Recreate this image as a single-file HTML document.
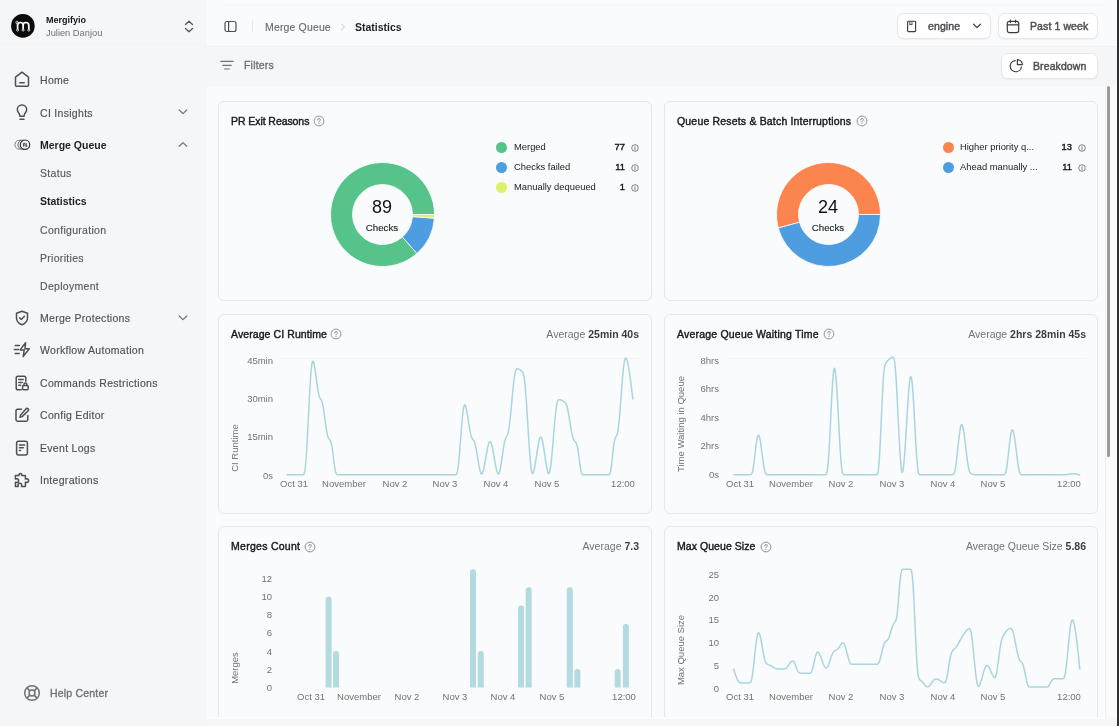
<!DOCTYPE html>
<html><head><meta charset="utf-8"><style>
html,body{margin:0;padding:0;}
body{width:1119px;height:726px;overflow:hidden;position:relative;background:#f9fafb;font-family:"Liberation Sans",sans-serif;}
.t{position:absolute;white-space:nowrap;will-change:transform;}
svg{overflow:visible;}
</style></head><body>
<div style="position:absolute;left:0px;top:0px;width:207px;height:726px;background:#f5f6f8;"></div>
<div style="position:absolute;left:0px;top:44px;width:207px;height:1px;background:#f1f2f4;"></div>
<div style="position:absolute;left:207px;top:0px;width:912px;height:46px;background:#fafbfc;"></div>
<div style="position:absolute;left:224px;top:4px;width:881px;height:3px;background:#f7f8f9;"></div>
<div style="position:absolute;left:207px;top:46px;width:912px;height:40px;background:#f5f6f8;border-top:1.5px solid #eff0f2;box-sizing:border-box;"></div>
<div style="position:absolute;left:207px;top:86px;width:898px;height:632px;background:#fafbfc;"></div>
<div style="position:absolute;left:1105px;top:85px;width:12px;height:633px;background:#fafafa;border-left:1px solid #f0f0f0;box-sizing:border-box;"></div>
<div style="position:absolute;left:1107px;top:86px;width:3px;height:371px;background:#9b9b9b;border-radius:2px;"></div>
<div style="position:absolute;left:1117px;top:0px;width:2px;height:726px;background:#2e3032;"></div>
<svg style="position:absolute;left:11px;top:14px;" width="24" height="24" viewBox="0 0 24 24"><circle cx="11.9" cy="11.9" r="11.8" fill="#0b0b0b"/><path d="M6.6 16 V9.2 M6.6 11.2 Q6.6 8.5 9.35 8.5 Q12.1 8.5 12.1 11.2 V16 M12.1 11.2 Q12.1 8.5 14.95 8.5 Q17.8 8.5 17.8 11.2 V16" stroke="#fff" stroke-width="1.7" fill="none"/><circle cx="6.6" cy="16.1" r="1" fill="#0b0b0b" stroke="#fff" stroke-width="0.8"/><circle cx="12.1" cy="16.1" r="1" fill="#0b0b0b" stroke="#fff" stroke-width="0.8"/><circle cx="17.8" cy="16.1" r="1" fill="#0b0b0b" stroke="#fff" stroke-width="0.8"/><circle cx="5.9" cy="8.4" r="1.1" fill="#0b0b0b" stroke="#fff" stroke-width="0.8"/></svg>
<div class="t" style="left:45.50px;top:14.93px;font-size:9px;line-height:11.7px;font-weight:700;color:#141414;">Mergifyio</div>
<div class="t" style="left:45.50px;top:26.73px;font-size:9.3px;line-height:12.09px;font-weight:400;color:#707275;">Julien Danjou</div>
<svg style="position:absolute;left:183px;top:19px;" width="12" height="15" viewBox="0 0 12 15"><path d="M2.5 5.5 L6 2.2 L9.5 5.5 M2.5 9.5 L6 12.8 L9.5 9.5" stroke="#4e5055" stroke-width="1.2" fill="none" stroke-linecap="round" stroke-linejoin="round"/></svg>
<div class="t" style="left:39.80px;top:74.24px;font-size:10.5px;line-height:13.65px;font-weight:400;color:#4e5055;-webkit-text-stroke:0.15px #4e5055;letter-spacing:0.3px;">Home</div>
<div class="t" style="left:39.80px;top:107.14px;font-size:10.5px;line-height:13.65px;font-weight:400;color:#4e5055;-webkit-text-stroke:0.15px #4e5055;letter-spacing:0.3px;">CI Insights</div>
<div class="t" style="left:39.80px;top:139.34px;font-size:10.5px;line-height:13.65px;font-weight:700;color:#1e1f22;">Merge Queue</div>
<div class="t" style="left:39.80px;top:312.34px;font-size:10.5px;line-height:13.65px;font-weight:400;color:#4e5055;-webkit-text-stroke:0.15px #4e5055;letter-spacing:0.3px;">Merge Protections</div>
<div class="t" style="left:39.80px;top:344.04px;font-size:10.5px;line-height:13.65px;font-weight:400;color:#4e5055;-webkit-text-stroke:0.15px #4e5055;letter-spacing:0.3px;">Workflow Automation</div>
<div class="t" style="left:39.80px;top:377.14px;font-size:10.5px;line-height:13.65px;font-weight:400;color:#4e5055;-webkit-text-stroke:0.15px #4e5055;letter-spacing:0.3px;">Commands Restrictions</div>
<div class="t" style="left:39.80px;top:409.24px;font-size:10.5px;line-height:13.65px;font-weight:400;color:#4e5055;-webkit-text-stroke:0.15px #4e5055;letter-spacing:0.3px;">Config Editor</div>
<div class="t" style="left:39.80px;top:442.24px;font-size:10.5px;line-height:13.65px;font-weight:400;color:#4e5055;-webkit-text-stroke:0.15px #4e5055;letter-spacing:0.3px;">Event Logs</div>
<div class="t" style="left:39.80px;top:474.34px;font-size:10.5px;line-height:13.65px;font-weight:400;color:#4e5055;-webkit-text-stroke:0.15px #4e5055;letter-spacing:0.3px;">Integrations</div>
<div class="t" style="left:39.80px;top:167.24px;font-size:10.5px;line-height:13.65px;font-weight:400;color:#56585c;-webkit-text-stroke:0.15px #56585c;letter-spacing:0.3px;">Status</div>
<div class="t" style="left:39.80px;top:195.34px;font-size:10.5px;line-height:13.65px;font-weight:700;color:#1e1f22;">Statistics</div>
<div class="t" style="left:39.80px;top:224.34px;font-size:10.5px;line-height:13.65px;font-weight:400;color:#56585c;-webkit-text-stroke:0.15px #56585c;letter-spacing:0.3px;">Configuration</div>
<div class="t" style="left:39.80px;top:252.24px;font-size:10.5px;line-height:13.65px;font-weight:400;color:#56585c;-webkit-text-stroke:0.15px #56585c;letter-spacing:0.3px;">Priorities</div>
<div class="t" style="left:39.80px;top:280.34px;font-size:10.5px;line-height:13.65px;font-weight:400;color:#56585c;-webkit-text-stroke:0.15px #56585c;letter-spacing:0.3px;">Deployment</div>
<svg style="position:absolute;left:13px;top:70px;" width="18" height="18" viewBox="0 0 18 18"><path d="M2.5 7.2 L9 2.2 L15.5 7.2 V15.2 Q15.5 16.2 14.5 16.2 H3.5 Q2.5 16.2 2.5 15.2 Z" stroke="#4e5055" stroke-width="1.5" fill="none" stroke-linecap="round" stroke-linejoin="round"/><path d="M6.8 12.8 H11.2" stroke="#4e5055" stroke-width="1.5" fill="none" stroke-linecap="round" stroke-linejoin="round"/></svg>
<svg style="position:absolute;left:13px;top:103px;" width="18" height="18" viewBox="0 0 18 18"><path d="M9 2 C6 2 4.3 4.2 4.3 6.6 C4.3 8.6 5.5 9.6 6.3 10.8 C6.8 11.6 6.9 12.4 6.9 13.2 H11.1 C11.1 12.4 11.2 11.6 11.7 10.8 C12.5 9.6 13.7 8.6 13.7 6.6 C13.7 4.2 12 2 9 2 Z" stroke="#4e5055" stroke-width="1.5" fill="none" stroke-linecap="round" stroke-linejoin="round"/><path d="M7 16.2 H11" stroke="#4e5055" stroke-width="1.5" fill="none" stroke-linecap="round" stroke-linejoin="round"/></svg>
<svg style="position:absolute;left:13px;top:136px;" width="18" height="18" viewBox="0 0 18 18"><circle cx="6.4" cy="8.7" r="4.5" stroke="#7b8089" stroke-width="1" fill="#f5f6f8"/><circle cx="9.6" cy="8.7" r="4.6" stroke="#5b6068" stroke-width="1" fill="#f5f6f8"/><circle cx="12" cy="8.7" r="4.7" stroke="#2f3337" stroke-width="1.2" fill="#f5f6f8"/><path d="M10.4 10.6 V7.4 H12 V10.6 M13.3 7.2 V10.4 H14.3" stroke="#3f4349" stroke-width="1" fill="none"/></svg>
<svg style="position:absolute;left:13px;top:309px;" width="18" height="18" viewBox="0 0 18 18"><path d="M9 2.2 L14.5 4.2 V9 C14.5 12.2 12 14.6 9 15.8 C6 14.6 3.5 12.2 3.5 9 V4.2 Z" stroke="#4e5055" stroke-width="1.5" fill="none" stroke-linecap="round" stroke-linejoin="round"/><path d="M6.6 8.9 L8.3 10.5 L11.4 7.3" stroke="#4e5055" stroke-width="1.5" fill="none" stroke-linecap="round" stroke-linejoin="round"/></svg>
<svg style="position:absolute;left:13px;top:341px;" width="18" height="18" viewBox="0 0 18 18"><path d="M12.6 1.7 L7.1 8.9 H11.2 L10.2 15.5 L16.2 7.7 H12 Z" stroke="#4e5055" stroke-width="1.5" fill="none" stroke-linecap="round" stroke-linejoin="round" stroke-width="1.3"/><path d="M2.2 4.4 H6.4 M1.4 8.4 H5.4 M2.2 12.6 H6.2" stroke="#4e5055" stroke-width="1.5" fill="none" stroke-linecap="round" stroke-linejoin="round" stroke-width="1.3"/></svg>
<svg style="position:absolute;left:13px;top:374px;" width="18" height="18" viewBox="0 0 18 18"><path d="M12.8 7.2 V4 Q12.8 2.2 11 2.2 H5 Q3.2 2.2 3.2 4 V14 Q3.2 15.8 5 15.8 H8.2" stroke="#4e5055" stroke-width="1.5" fill="none" stroke-linecap="round" stroke-linejoin="round"/><path d="M5.8 5.6 H10.2 M5.8 8.4 H9.2 M5.8 11.2 H7.6" stroke="#4e5055" stroke-width="1.5" fill="none" stroke-linecap="round" stroke-linejoin="round"/><rect x="9.6" y="11.6" width="5.6" height="4.2" rx="1" stroke="#4e5055" stroke-width="1.5" fill="none" stroke-linecap="round" stroke-linejoin="round"/><path d="M10.9 11.6 V10.6 A1.5 1.5 0 0 1 13.9 10.6 V11.6" stroke="#4e5055" stroke-width="1.5" fill="none" stroke-linecap="round" stroke-linejoin="round"/></svg>
<svg style="position:absolute;left:13px;top:406px;" width="18" height="18" viewBox="0 0 18 18"><path d="M8.5 3.2 H4.6 Q3 3.2 3 4.8 V13.6 Q3 15.2 4.6 15.2 H13.2 Q14.8 15.2 14.8 13.6 V9.6" stroke="#4e5055" stroke-width="1.5" fill="none" stroke-linecap="round" stroke-linejoin="round"/><path d="M13.6 2.2 Q15.6 2.2 15.6 4.2 L9.2 10.6 L7 11.2 L7.6 9 Z" stroke="#4e5055" stroke-width="1.5" fill="none" stroke-linecap="round" stroke-linejoin="round"/></svg>
<svg style="position:absolute;left:13px;top:439px;" width="18" height="18" viewBox="0 0 18 18"><rect x="3.6" y="2.2" width="10.8" height="13.8" rx="2" stroke="#4e5055" stroke-width="1.5" fill="none" stroke-linecap="round" stroke-linejoin="round"/><path d="M6.4 6 H11.6 M6.4 8.8 H10.4 M6.4 11.6 H7.6" stroke="#4e5055" stroke-width="1.5" fill="none" stroke-linecap="round" stroke-linejoin="round"/></svg>
<svg style="position:absolute;left:13px;top:471px;" width="18" height="18" viewBox="0 0 18 18"><path d="M7.4 2.6 C8.4 2.6 8.8 3.4 8.8 4.2 L8.8 4.6 H12.4 V8 C13 7.8 13.2 7.7 13.8 7.7 C14.9 7.7 15.6 8.6 15.6 9.6 C15.6 10.6 14.9 11.4 13.8 11.4 C13.2 11.4 13 11.3 12.4 11.1 V15.4 H8.4 C8.6 14.8 8.7 14.6 8.7 14 C8.7 12.9 7.8 12.2 6.8 12.2 C5.8 12.2 5 12.9 5 14 C5 14.6 5.1 14.8 5.3 15.4 H2.4 V11.2 C3 11.4 3.2 11.5 3.8 11.5 C4.9 11.5 5.6 10.6 5.6 9.6 C5.6 8.6 4.9 7.8 3.8 7.8 C3.2 7.8 3 7.9 2.4 8.1 V4.6 H6 V4.2 C6 3.4 6.4 2.6 7.4 2.6 Z" stroke="#4e5055" stroke-width="1.5" fill="none" stroke-linecap="round" stroke-linejoin="round" stroke-width="1.35"/></svg>
<svg style="position:absolute;left:177px;top:107px;" width="12" height="9" viewBox="0 0 12 9"><path d="M2.2 3 L6 6.6 L9.8 3" stroke="#707275" stroke-width="1.2" fill="none" stroke-linecap="round" stroke-linejoin="round"/></svg>
<svg style="position:absolute;left:177px;top:140px;" width="12" height="9" viewBox="0 0 12 9"><path d="M2.2 6.2 L6 2.6 L9.8 6.2" stroke="#707275" stroke-width="1.2" fill="none" stroke-linecap="round" stroke-linejoin="round"/></svg>
<svg style="position:absolute;left:177px;top:313px;" width="12" height="9" viewBox="0 0 12 9"><path d="M2.2 3 L6 6.6 L9.8 3" stroke="#707275" stroke-width="1.2" fill="none" stroke-linecap="round" stroke-linejoin="round"/></svg>
<svg style="position:absolute;left:23px;top:684px;" width="18" height="18" viewBox="0 0 18 18"><circle cx="9" cy="9" r="7.3" stroke="#707275" stroke-width="1.5" fill="none"/><circle cx="9" cy="9" r="3" stroke="#707275" stroke-width="1.5" fill="none"/><path d="M3.9 3.9 L6.9 6.9 M14.1 3.9 L11.1 6.9 M3.9 14.1 L6.9 11.1 M14.1 14.1 L11.1 11.1" stroke="#707275" stroke-width="1.5"/></svg>
<div class="t" style="left:50.30px;top:687.04px;font-size:10.5px;line-height:13.65px;font-weight:400;color:#707275;-webkit-text-stroke:0.35px #707275;letter-spacing:0.2px;">Help Center</div>
<svg style="position:absolute;left:224px;top:20px;" width="13" height="13" viewBox="0 0 13 13"><rect x="1" y="1.5" width="11" height="10" rx="2" stroke="#4e5055" stroke-width="1.2" fill="none"/><path d="M4.6 1.5 V11.5" stroke="#4e5055" stroke-width="1.2"/></svg>
<div style="position:absolute;left:252px;top:20px;width:1px;height:12px;background:#e5e7eb;"></div>
<div class="t" style="left:264.80px;top:21.24px;font-size:10.5px;line-height:13.65px;font-weight:400;color:#67696d;letter-spacing:0.15px;-webkit-text-stroke:0.12px #67696d;">Merge Queue</div>
<svg style="position:absolute;left:339px;top:22px;" width="8" height="10" viewBox="0 0 8 10"><path d="M2.5 2 L5.5 5 L2.5 8" stroke="#c4c8ce" stroke-width="1" fill="none" stroke-linecap="round"/></svg>
<div class="t" style="left:355.40px;top:21.24px;font-size:10.5px;line-height:13.65px;font-weight:700;color:#1e1f22;">Statistics</div>
<div style="position:absolute;left:897px;top:13px;width:94px;height:26px;background:#fff;border:1px solid #e5e7eb;border-radius:6px;box-sizing:border-box;box-shadow:0 1px 1px rgba(0,0,0,0.04);"></div>
<svg style="position:absolute;left:906px;top:20px;" width="11" height="13" viewBox="0 0 11 13"><rect x="1.6" y="1.2" width="8" height="10.4" rx="0.8" stroke="#3c3e42" stroke-width="1.15" fill="none"/><path d="M3.8 1.3 V5 L4.9 4.1 L6 5 V1.3" stroke="#3c3e42" stroke-width="0.9" fill="none"/></svg>
<div class="t" style="left:927.90px;top:19.94px;font-size:10.5px;line-height:13.65px;font-weight:400;color:#4e5055;-webkit-text-stroke:0.45px #4e5055;letter-spacing:0.1px;">engine</div>
<svg style="position:absolute;left:972px;top:22px;" width="10" height="8" viewBox="0 0 10 8"><path d="M1.5 2.2 L5 5.6 L8.5 2.2" stroke="#3c3e42" stroke-width="1.2" fill="none" stroke-linecap="round" stroke-linejoin="round"/></svg>
<div style="position:absolute;left:998px;top:13px;width:100px;height:26px;background:#fff;border:1px solid #e5e7eb;border-radius:6px;box-sizing:border-box;box-shadow:0 1px 1px rgba(0,0,0,0.04);"></div>
<svg style="position:absolute;left:1006px;top:19px;" width="14" height="15" viewBox="0 0 14 15"><rect x="1.3" y="2.4" width="11.4" height="11.2" rx="2" stroke="#3c3e42" stroke-width="1.2" fill="none"/><path d="M1.3 5.8 H12.7 M4.4 1 V3.6 M9.6 1 V3.6" stroke="#3c3e42" stroke-width="1.2" stroke-linecap="round"/></svg>
<div class="t" style="left:1030.00px;top:20.34px;font-size:10.5px;line-height:13.65px;font-weight:400;color:#4e5055;-webkit-text-stroke:0.45px #4e5055;letter-spacing:0.1px;">Past 1 week</div>
<svg style="position:absolute;left:220px;top:59px;" width="14" height="12" viewBox="0 0 14 12"><path d="M0.8 2.4 H13.2 M2.8 6.4 H11.2 M4.6 10 H9.4" stroke="#707275" stroke-width="1.2" stroke-linecap="round"/></svg>
<div class="t" style="left:243.60px;top:59.24px;font-size:10.5px;line-height:13.65px;font-weight:400;color:#707275;-webkit-text-stroke:0.35px #707275;letter-spacing:0.2px;">Filters</div>
<div style="position:absolute;left:1001px;top:53px;width:97px;height:26px;background:#fff;border:1px solid #e5e7eb;border-radius:6px;box-sizing:border-box;box-shadow:0 1px 1px rgba(0,0,0,0.04);"></div>
<svg style="position:absolute;left:1008px;top:58px;" width="16" height="16" viewBox="0 0 16 16"><path d="M7.2 2.6 A5.6 5.6 0 1 0 13.4 8.8" stroke="#3c3e42" stroke-width="1.2" fill="none" stroke-linecap="round"/><path d="M9.4 1.6 A5 5 0 0 1 14.4 6.6 H9.4 Z" stroke="#3c3e42" stroke-width="1.2" fill="none" stroke-linejoin="round"/></svg>
<div class="t" style="left:1033.20px;top:60.34px;font-size:10.5px;line-height:13.65px;font-weight:400;color:#4e5055;-webkit-text-stroke:0.45px #4e5055;letter-spacing:0.1px;">Breakdown</div>
<div style="position:absolute;left:218px;top:101px;width:434px;height:200px;background:#fafbfc;border:1px solid #e6e7ea;border-radius:6px;box-sizing:border-box;"></div>
<div style="position:absolute;left:664px;top:101px;width:434px;height:200px;background:#fafbfc;border:1px solid #e6e7ea;border-radius:6px;box-sizing:border-box;"></div>
<div style="position:absolute;left:218px;top:313.5px;width:434px;height:200px;background:#fafbfc;border:1px solid #e6e7ea;border-radius:6px;box-sizing:border-box;"></div>
<div style="position:absolute;left:664px;top:313.5px;width:434px;height:200px;background:#fafbfc;border:1px solid #e6e7ea;border-radius:6px;box-sizing:border-box;"></div>
<div style="position:absolute;left:218px;top:526px;width:434px;height:200px;background:#fafbfc;border:1px solid #e6e7ea;border-radius:6px;box-sizing:border-box;"></div>
<div style="position:absolute;left:664px;top:526px;width:434px;height:200px;background:#fafbfc;border:1px solid #e6e7ea;border-radius:6px;box-sizing:border-box;"></div>
<div class="t" style="left:230.70px;top:115.14px;font-size:10.5px;line-height:13.65px;font-weight:400;color:#16181d;-webkit-text-stroke:0.4px #16181d;letter-spacing:-0.07px;">PR Exit Reasons</div>
<svg style="position:absolute;left:312.5px;top:115.3px;" width="12" height="12" viewBox="0 0 12 12"><circle cx="6" cy="6" r="4.9" stroke="#8c8e92" stroke-width="0.95" fill="none"/><path d="M4.6 4.9 Q4.6 3.5 6 3.5 Q7.4 3.5 7.4 4.8 Q7.4 5.6 6.5 6 Q6 6.3 6 7" stroke="#8c8e92" stroke-width="0.95" fill="none" stroke-linecap="round"/><circle cx="6" cy="8.5" r="0.55" fill="#8c8e92"/></svg>
<svg style="position:absolute;left:329.8px;top:161.9px;" width="105" height="105" viewBox="0 0 105 105"><path d="M104.50 52.50 A52 52 0 1 0 86.93 91.47 L72.36 74.98 A30 30 0 1 1 82.50 52.50 Z" fill="#56c48a" stroke="#fff" stroke-width="0.8" stroke-linejoin="round"/><path d="M86.93 91.47 A52 52 0 0 0 104.37 56.17 L82.43 54.62 A30 30 0 0 1 72.36 74.98 Z" fill="#4d9de0" stroke="#fff" stroke-width="0.8" stroke-linejoin="round"/><path d="M104.37 56.17 A52 52 0 0 0 104.50 52.50 L82.50 52.50 A30 30 0 0 1 82.43 54.62 Z" fill="#dcf26b" stroke="#fff" stroke-width="0.8" stroke-linejoin="round"/></svg>
<div class="t" style="left:182.30px;width:400px;text-align:center;top:195.96px;font-size:18px;line-height:23.4px;font-weight:400;color:#111111;">89</div>
<div class="t" style="left:182.30px;width:400px;text-align:center;top:221.98px;font-size:9.75px;line-height:12.68px;font-weight:400;color:#1a1a1a;-webkit-text-stroke:0.12px #1a1a1a;">Checks</div>
<svg style="position:absolute;left:496px;top:142.0px;" width="11" height="11" viewBox="0 0 11 11"><circle cx="5.5" cy="5.5" r="5.5" fill="#56c48a"/></svg>
<div class="t" style="left:513.80px;top:141.43px;font-size:9.4px;line-height:12.22px;font-weight:400;color:#1a1b1e;">Merged</div>
<div class="t" style="left:225.30px;width:400px;text-align:right;top:141.43px;font-size:9.4px;line-height:12.22px;font-weight:400;color:#111111;-webkit-text-stroke:0.35px #111;">77</div>
<svg style="position:absolute;left:630.4px;top:142.8px;" width="10" height="10" viewBox="0 0 10 10"><circle cx="5" cy="5" r="3.3" stroke="#555a61" stroke-width="0.75" fill="none"/><path d="M5 4.2 V6.6" stroke="#555a61" stroke-width="0.75" stroke-linecap="round"/><circle cx="5" cy="3.2" r="0.35" fill="#555a61"/></svg>
<svg style="position:absolute;left:496px;top:162.0px;" width="11" height="11" viewBox="0 0 11 11"><circle cx="5.5" cy="5.5" r="5.5" fill="#4d9de0"/></svg>
<div class="t" style="left:513.80px;top:161.43px;font-size:9.4px;line-height:12.22px;font-weight:400;color:#1a1b1e;">Checks failed</div>
<div class="t" style="left:225.30px;width:400px;text-align:right;top:161.43px;font-size:9.4px;line-height:12.22px;font-weight:400;color:#111111;-webkit-text-stroke:0.35px #111;">11</div>
<svg style="position:absolute;left:630.4px;top:162.8px;" width="10" height="10" viewBox="0 0 10 10"><circle cx="5" cy="5" r="3.3" stroke="#555a61" stroke-width="0.75" fill="none"/><path d="M5 4.2 V6.6" stroke="#555a61" stroke-width="0.75" stroke-linecap="round"/><circle cx="5" cy="3.2" r="0.35" fill="#555a61"/></svg>
<svg style="position:absolute;left:496px;top:182.0px;" width="11" height="11" viewBox="0 0 11 11"><circle cx="5.5" cy="5.5" r="5.5" fill="#dcf26b"/></svg>
<div class="t" style="left:513.80px;top:181.43px;font-size:9.4px;line-height:12.22px;font-weight:400;color:#1a1b1e;">Manually dequeued</div>
<div class="t" style="left:225.30px;width:400px;text-align:right;top:181.43px;font-size:9.4px;line-height:12.22px;font-weight:400;color:#111111;-webkit-text-stroke:0.35px #111;">1</div>
<svg style="position:absolute;left:630.4px;top:182.8px;" width="10" height="10" viewBox="0 0 10 10"><circle cx="5" cy="5" r="3.3" stroke="#555a61" stroke-width="0.75" fill="none"/><path d="M5 4.2 V6.6" stroke="#555a61" stroke-width="0.75" stroke-linecap="round"/><circle cx="5" cy="3.2" r="0.35" fill="#555a61"/></svg>
<div class="t" style="left:676.90px;top:115.14px;font-size:10.5px;line-height:13.65px;font-weight:400;color:#16181d;-webkit-text-stroke:0.4px #16181d;letter-spacing:0.18px;">Queue Resets &amp; Batch Interruptions</div>
<svg style="position:absolute;left:855.5px;top:115.3px;" width="12" height="12" viewBox="0 0 12 12"><circle cx="6" cy="6" r="4.9" stroke="#8c8e92" stroke-width="0.95" fill="none"/><path d="M4.6 4.9 Q4.6 3.5 6 3.5 Q7.4 3.5 7.4 4.8 Q7.4 5.6 6.5 6 Q6 6.3 6 7" stroke="#8c8e92" stroke-width="0.95" fill="none" stroke-linecap="round"/><circle cx="6" cy="8.5" r="0.55" fill="#8c8e92"/></svg>
<svg style="position:absolute;left:775.7px;top:161.9px;" width="105" height="105" viewBox="0 0 105 105"><path d="M104.50 52.50 A52 52 0 1 0 2.27 65.96 L23.52 60.26 A30 30 0 1 1 82.50 52.50 Z" fill="#fc844f" stroke="#fff" stroke-width="0.8" stroke-linejoin="round"/><path d="M2.27 65.96 A52 52 0 0 0 104.50 52.50 L82.50 52.50 A30 30 0 0 1 23.52 60.26 Z" fill="#4d9de0" stroke="#fff" stroke-width="0.8" stroke-linejoin="round"/></svg>
<div class="t" style="left:628.20px;width:400px;text-align:center;top:195.96px;font-size:18px;line-height:23.4px;font-weight:400;color:#111111;">24</div>
<div class="t" style="left:628.20px;width:400px;text-align:center;top:221.98px;font-size:9.75px;line-height:12.68px;font-weight:400;color:#1a1a1a;-webkit-text-stroke:0.12px #1a1a1a;">Checks</div>
<svg style="position:absolute;left:942.5px;top:142.0px;" width="11" height="11" viewBox="0 0 11 11"><circle cx="5.5" cy="5.5" r="5.5" fill="#fc844f"/></svg>
<div class="t" style="left:959.60px;top:141.43px;font-size:9.4px;line-height:12.22px;font-weight:400;color:#1a1b1e;">Higher priority q...</div>
<div class="t" style="left:671.50px;width:400px;text-align:right;top:141.43px;font-size:9.4px;line-height:12.22px;font-weight:400;color:#111111;-webkit-text-stroke:0.35px #111;">13</div>
<svg style="position:absolute;left:1076.6px;top:142.8px;" width="10" height="10" viewBox="0 0 10 10"><circle cx="5" cy="5" r="3.3" stroke="#555a61" stroke-width="0.75" fill="none"/><path d="M5 4.2 V6.6" stroke="#555a61" stroke-width="0.75" stroke-linecap="round"/><circle cx="5" cy="3.2" r="0.35" fill="#555a61"/></svg>
<svg style="position:absolute;left:942.5px;top:162.0px;" width="11" height="11" viewBox="0 0 11 11"><circle cx="5.5" cy="5.5" r="5.5" fill="#4d9de0"/></svg>
<div class="t" style="left:959.60px;top:161.43px;font-size:9.4px;line-height:12.22px;font-weight:400;color:#1a1b1e;">Ahead manually ...</div>
<div class="t" style="left:671.50px;width:400px;text-align:right;top:161.43px;font-size:9.4px;line-height:12.22px;font-weight:400;color:#111111;-webkit-text-stroke:0.35px #111;">11</div>
<svg style="position:absolute;left:1076.6px;top:162.8px;" width="10" height="10" viewBox="0 0 10 10"><circle cx="5" cy="5" r="3.3" stroke="#555a61" stroke-width="0.75" fill="none"/><path d="M5 4.2 V6.6" stroke="#555a61" stroke-width="0.75" stroke-linecap="round"/><circle cx="5" cy="3.2" r="0.35" fill="#555a61"/></svg>
<div class="t" style="left:230.70px;top:328.24px;font-size:10.5px;line-height:13.65px;font-weight:400;color:#16181d;-webkit-text-stroke:0.4px #16181d;letter-spacing:0.09px;">Average CI Runtime</div>
<svg style="position:absolute;left:330.4px;top:328px;" width="12" height="12" viewBox="0 0 12 12"><circle cx="6" cy="6" r="4.9" stroke="#8c8e92" stroke-width="0.95" fill="none"/><path d="M4.6 4.9 Q4.6 3.5 6 3.5 Q7.4 3.5 7.4 4.8 Q7.4 5.6 6.5 6 Q6 6.3 6 7" stroke="#8c8e92" stroke-width="0.95" fill="none" stroke-linecap="round"/><circle cx="6" cy="8.5" r="0.55" fill="#8c8e92"/></svg>
<div class="t" style="left:239.10px;width:400px;text-align:right;top:328.24px;font-size:10.5px;line-height:13.65px;font-weight:400;color:#3c3e42;"><span style="color:#707275">Average </span><span style="font-weight:700;color:#3c3e42">25min 40s</span></div>
<div style="position:absolute;left:280px;top:358px;width:360px;height:1px;background:#f3f4f6;"></div>
<div class="t" style="left:-127.50px;width:400px;text-align:right;top:354.63px;font-size:9.5px;line-height:12.35px;font-weight:400;color:#707275;">45min</div>
<div class="t" style="left:-127.50px;width:400px;text-align:right;top:392.53px;font-size:9.5px;line-height:12.35px;font-weight:400;color:#707275;">30min</div>
<div class="t" style="left:-127.50px;width:400px;text-align:right;top:431.43px;font-size:9.5px;line-height:12.35px;font-weight:400;color:#707275;">15min</div>
<div class="t" style="left:-127.50px;width:400px;text-align:right;top:469.73px;font-size:9.5px;line-height:12.35px;font-weight:400;color:#707275;">0s</div>
<div class="t" style="left:93.50px;width:400px;text-align:center;top:478.33px;font-size:9.5px;line-height:12.35px;font-weight:400;color:#707275;">Oct 31</div>
<div class="t" style="left:144.00px;width:400px;text-align:center;top:478.33px;font-size:9.5px;line-height:12.35px;font-weight:400;color:#707275;">November</div>
<div class="t" style="left:194.90px;width:400px;text-align:center;top:478.33px;font-size:9.5px;line-height:12.35px;font-weight:400;color:#707275;">Nov 2</div>
<div class="t" style="left:245.40px;width:400px;text-align:center;top:478.33px;font-size:9.5px;line-height:12.35px;font-weight:400;color:#707275;">Nov 3</div>
<div class="t" style="left:296.30px;width:400px;text-align:center;top:478.33px;font-size:9.5px;line-height:12.35px;font-weight:400;color:#707275;">Nov 4</div>
<div class="t" style="left:346.80px;width:400px;text-align:center;top:478.33px;font-size:9.5px;line-height:12.35px;font-weight:400;color:#707275;">Nov 5</div>
<div class="t" style="left:423.40px;width:400px;text-align:center;top:478.33px;font-size:9.5px;line-height:12.35px;font-weight:400;color:#707275;">12:00</div>
<div class="t" style="left:85px;top:441.3px;width:300px;height:14px;line-height:14px;text-align:center;font-size:9.5px;color:#707275;transform:rotate(-90deg);">CI Runtime</div>
<svg style="position:absolute;left:0px;top:0px;pointer-events:none;" width="1119" height="726" viewBox="0 0 1119 726"><path d="M287.20 474.80 L287.70 474.80 L288.20 474.80 L288.70 474.80 L289.20 474.80 L289.70 474.80 L290.20 474.80 L290.70 474.80 L291.20 474.80 L291.70 474.80 L292.20 474.80 L292.70 474.80 L293.20 474.80 L293.70 474.80 L294.20 474.80 L294.70 474.80 L295.20 474.80 L295.70 474.80 L296.20 474.80 L296.70 474.80 L297.20 474.80 L297.70 474.80 L298.20 474.80 L298.70 474.80 L299.20 474.80 L299.70 474.80 L300.20 474.80 L300.70 474.80 L301.20 474.80 L301.70 474.80 L302.20 474.80 L302.70 474.79 L303.20 474.72 L303.70 474.41 L304.20 473.53 L304.71 471.56 L305.22 468.10 L305.73 462.98 L306.24 456.32 L306.75 448.37 L307.25 439.41 L307.76 429.77 L308.27 419.73 L308.78 409.62 L309.29 399.74 L309.80 390.40 L310.31 381.91 L310.82 374.57 L311.33 368.67 L311.84 364.44 L312.35 361.99 L312.85 361.18 L313.36 361.74 L313.86 363.32 L314.36 365.66 L314.87 368.58 L315.37 371.91 L315.87 375.52 L316.38 379.26 L316.88 382.98 L317.39 386.55 L317.89 389.82 L318.39 392.67 L318.90 394.98 L319.40 396.72 L319.92 397.93 L320.44 398.78 L320.96 399.52 L321.48 400.42 L322.00 401.70 L322.50 403.52 L323.00 405.93 L323.50 408.87 L324.00 412.22 L324.50 415.85 L325.00 419.61 L325.50 423.36 L326.00 426.94 L326.50 430.22 L327.00 433.05 L327.50 435.33 L328.00 437.02 L328.50 438.18 L329.00 438.94 L329.50 439.50 L330.00 440.07 L330.50 440.89 L331.00 442.19 L331.51 444.19 L332.03 446.95 L332.54 450.39 L333.06 454.33 L333.57 458.50 L334.09 462.61 L334.60 466.40 L335.11 469.61 L335.63 472.02 L336.14 473.56 L336.65 474.37 L337.15 474.69 L337.65 474.78 L338.15 474.80 L338.65 474.80 L339.15 474.80 L339.65 474.80 L340.15 474.80 L340.65 474.80 L341.15 474.80 L341.65 474.80 L342.15 474.80 L342.65 474.80 L343.15 474.80 L343.65 474.80 L344.15 474.80 L344.65 474.80 L345.15 474.80 L345.65 474.80 L346.15 474.80 L346.65 474.80 L347.15 474.80 L347.65 474.80 L348.15 474.80 L348.66 474.80 L349.16 474.80 L349.66 474.80 L350.16 474.80 L350.66 474.80 L351.16 474.80 L351.66 474.80 L352.16 474.80 L352.66 474.80 L353.16 474.80 L353.66 474.80 L354.16 474.80 L354.66 474.80 L355.16 474.80 L355.66 474.80 L356.16 474.80 L356.66 474.80 L357.16 474.80 L357.66 474.80 L358.16 474.80 L358.66 474.80 L359.16 474.80 L359.66 474.80 L360.16 474.80 L360.66 474.80 L361.16 474.80 L361.66 474.80 L362.16 474.80 L362.66 474.80 L363.16 474.80 L363.66 474.80 L364.16 474.80 L364.66 474.80 L365.16 474.80 L365.66 474.80 L366.16 474.80 L366.66 474.80 L367.16 474.80 L367.66 474.80 L368.16 474.80 L368.66 474.80 L369.16 474.80 L369.66 474.80 L370.16 474.80 L370.66 474.80 L371.16 474.80 L371.66 474.80 L372.16 474.80 L372.67 474.80 L373.17 474.80 L373.67 474.80 L374.17 474.80 L374.67 474.80 L375.17 474.80 L375.67 474.80 L376.17 474.80 L376.67 474.80 L377.17 474.80 L377.67 474.80 L378.17 474.80 L378.67 474.80 L379.17 474.80 L379.67 474.80 L380.17 474.80 L380.67 474.80 L381.17 474.80 L381.67 474.80 L382.17 474.80 L382.67 474.80 L383.17 474.80 L383.67 474.80 L384.17 474.80 L384.67 474.80 L385.17 474.80 L385.67 474.80 L386.17 474.80 L386.67 474.80 L387.17 474.80 L387.67 474.80 L388.17 474.80 L388.67 474.80 L389.17 474.80 L389.67 474.80 L390.17 474.80 L390.67 474.80 L391.17 474.80 L391.67 474.80 L392.17 474.80 L392.67 474.80 L393.17 474.80 L393.67 474.80 L394.17 474.80 L394.67 474.80 L395.17 474.80 L395.67 474.80 L396.17 474.80 L396.68 474.80 L397.18 474.80 L397.68 474.80 L398.18 474.80 L398.68 474.80 L399.18 474.80 L399.68 474.80 L400.18 474.80 L400.68 474.80 L401.18 474.80 L401.68 474.80 L402.18 474.80 L402.68 474.80 L403.18 474.80 L403.68 474.80 L404.18 474.80 L404.68 474.80 L405.18 474.80 L405.68 474.80 L406.18 474.80 L406.68 474.80 L407.18 474.80 L407.68 474.80 L408.18 474.80 L408.68 474.80 L409.18 474.80 L409.68 474.80 L410.18 474.80 L410.68 474.80 L411.18 474.80 L411.68 474.80 L412.18 474.80 L412.68 474.80 L413.18 474.80 L413.68 474.80 L414.18 474.80 L414.68 474.80 L415.18 474.80 L415.68 474.80 L416.18 474.80 L416.68 474.80 L417.18 474.80 L417.68 474.80 L418.18 474.80 L418.68 474.80 L419.18 474.80 L419.68 474.80 L420.18 474.80 L420.69 474.80 L421.19 474.80 L421.69 474.80 L422.19 474.80 L422.69 474.80 L423.19 474.80 L423.69 474.80 L424.19 474.80 L424.69 474.80 L425.19 474.80 L425.69 474.80 L426.19 474.80 L426.69 474.80 L427.19 474.80 L427.69 474.80 L428.19 474.80 L428.69 474.80 L429.19 474.80 L429.69 474.80 L430.19 474.80 L430.69 474.80 L431.19 474.80 L431.69 474.80 L432.19 474.80 L432.69 474.80 L433.19 474.80 L433.69 474.80 L434.19 474.80 L434.69 474.80 L435.19 474.80 L435.69 474.80 L436.19 474.80 L436.69 474.80 L437.19 474.80 L437.69 474.80 L438.19 474.80 L438.69 474.80 L439.19 474.80 L439.69 474.80 L440.19 474.80 L440.69 474.80 L441.19 474.80 L441.69 474.80 L442.19 474.80 L442.69 474.80 L443.19 474.80 L443.69 474.80 L444.19 474.80 L444.70 474.80 L445.20 474.80 L445.70 474.80 L446.20 474.80 L446.70 474.80 L447.20 474.80 L447.70 474.80 L448.20 474.80 L448.70 474.80 L449.20 474.80 L449.70 474.80 L450.20 474.80 L450.70 474.80 L451.20 474.80 L451.70 474.80 L452.20 474.80 L452.70 474.80 L453.20 474.80 L453.70 474.80 L454.20 474.80 L454.70 474.80 L455.20 474.79 L455.70 474.74 L456.20 474.53 L456.70 473.91 L457.20 472.55 L457.71 470.15 L458.21 466.62 L458.71 462.05 L459.22 456.63 L459.72 450.57 L460.22 444.12 L460.73 437.49 L461.23 430.92 L461.73 424.63 L462.24 418.87 L462.74 413.84 L463.24 409.79 L463.75 406.88 L464.25 405.20 L464.75 404.72 L465.25 405.25 L465.75 406.59 L466.25 408.56 L466.75 411.01 L467.25 413.83 L467.75 416.91 L468.25 420.12 L468.75 423.37 L469.25 426.53 L469.75 429.49 L470.25 432.16 L470.75 434.42 L471.25 436.22 L471.75 437.56 L472.25 438.51 L472.75 439.21 L473.25 439.82 L473.75 440.51 L474.25 441.44 L474.75 442.76 L475.26 444.53 L475.77 446.75 L476.27 449.36 L476.78 452.27 L477.29 455.36 L477.80 458.54 L478.30 461.69 L478.81 464.70 L479.32 467.45 L479.83 469.86 L480.33 471.79 L480.84 473.16 L481.35 473.89 L481.85 473.94 L482.36 473.33 L482.87 472.12 L483.38 470.38 L483.89 468.22 L484.40 465.71 L484.91 462.95 L485.42 460.04 L485.93 457.05 L486.44 454.09 L486.95 451.24 L487.45 448.60 L487.96 446.25 L488.47 444.29 L488.98 442.80 L489.49 441.86 L490.00 441.53 L490.50 441.82 L491.00 442.70 L491.50 444.11 L492.00 445.97 L492.50 448.22 L493.00 450.75 L493.50 453.48 L494.00 456.35 L494.50 459.25 L495.00 462.12 L495.50 464.85 L496.00 467.38 L496.50 469.63 L497.00 471.49 L497.50 472.90 L498.00 473.75 L498.50 473.95 L499.00 473.44 L499.51 472.20 L500.01 470.27 L500.51 467.75 L501.02 464.77 L501.52 461.46 L502.03 457.95 L502.53 454.37 L503.03 450.86 L503.54 447.54 L504.04 444.54 L504.54 441.98 L505.05 439.94 L505.57 438.40 L506.11 437.28 L506.65 436.35 L507.19 435.37 L507.73 434.06 L508.25 432.18 L508.75 429.59 L509.26 426.27 L509.76 422.28 L510.26 417.72 L510.77 412.74 L511.27 407.48 L511.77 402.06 L512.28 396.64 L512.78 391.35 L513.28 386.34 L513.78 381.73 L514.29 377.68 L514.79 374.31 L515.29 371.75 L515.80 370.02 L516.30 369.06 L516.81 368.67 L517.33 368.60 L517.84 368.70 L518.36 368.87 L518.87 369.11 L519.39 369.39 L519.90 369.73 L520.41 370.12 L520.93 370.57 L521.44 371.06 L521.96 371.61 L522.47 372.26 L522.99 373.12 L523.50 374.44 L524.00 376.55 L524.51 379.76 L525.01 384.18 L525.51 389.73 L526.01 396.24 L526.52 403.51 L527.02 411.32 L527.52 419.46 L528.03 427.73 L528.53 435.90 L529.03 443.76 L529.53 451.11 L530.04 457.72 L530.54 463.38 L531.04 467.91 L531.55 471.13 L532.05 472.99 L532.55 473.59 L533.05 473.15 L533.55 471.90 L534.05 470.04 L534.55 467.70 L535.05 464.98 L535.55 461.98 L536.05 458.79 L536.55 455.50 L537.05 452.21 L537.55 449.02 L538.05 446.02 L538.55 443.30 L539.05 440.96 L539.55 439.09 L540.05 437.78 L540.55 437.12 L541.05 437.17 L541.56 437.95 L542.07 439.42 L542.57 441.50 L543.08 444.08 L543.58 447.06 L544.09 450.32 L544.60 453.76 L545.10 457.24 L545.61 460.68 L546.12 463.94 L546.62 466.92 L547.13 469.50 L547.63 471.57 L548.14 473.01 L548.65 473.66 L549.15 473.38 L549.66 472.08 L550.16 469.74 L550.67 466.42 L551.17 462.26 L551.68 457.41 L552.19 452.01 L552.69 446.22 L553.20 440.20 L553.70 434.10 L554.21 428.08 L554.71 422.29 L555.22 416.89 L555.73 412.04 L556.23 407.88 L556.74 404.55 L557.24 402.15 L557.75 400.67 L558.25 399.93 L558.75 399.67 L559.25 399.65 L559.75 399.73 L560.25 399.85 L560.75 400.01 L561.25 400.19 L561.75 400.41 L562.25 400.66 L562.75 400.94 L563.25 401.26 L563.75 401.60 L564.25 401.98 L564.75 402.39 L565.25 402.87 L565.75 403.49 L566.25 404.36 L566.75 405.61 L567.25 407.32 L567.75 409.48 L568.25 412.03 L568.75 414.88 L569.25 417.94 L569.75 421.11 L570.25 424.30 L570.75 427.40 L571.25 430.33 L571.75 432.99 L572.25 435.30 L572.75 437.20 L573.25 438.66 L573.75 439.74 L574.25 440.52 L574.75 441.13 L575.25 441.68 L575.75 442.32 L576.25 443.19 L576.75 444.46 L577.25 446.29 L577.75 448.79 L578.25 451.92 L578.75 455.54 L579.25 459.41 L579.75 463.27 L580.25 466.84 L580.75 469.87 L581.25 472.15 L581.75 473.62 L582.25 474.39 L582.75 474.69 L583.26 474.78 L583.76 474.80 L584.26 474.80 L584.76 474.80 L585.27 474.80 L585.77 474.80 L586.27 474.80 L586.78 474.80 L587.28 474.80 L587.78 474.80 L588.28 474.80 L588.79 474.80 L589.29 474.80 L589.79 474.80 L590.29 474.80 L590.80 474.80 L591.30 474.80 L591.80 474.80 L592.31 474.80 L592.81 474.80 L593.31 474.80 L593.81 474.80 L594.32 474.80 L594.82 474.80 L595.32 474.80 L595.82 474.80 L596.33 474.80 L596.83 474.80 L597.33 474.80 L597.84 474.80 L598.34 474.80 L598.84 474.80 L599.34 474.80 L599.85 474.80 L600.35 474.80 L600.85 474.80 L601.35 474.80 L601.86 474.80 L602.36 474.80 L602.86 474.80 L603.36 474.80 L603.87 474.80 L604.37 474.80 L604.87 474.80 L605.38 474.80 L605.88 474.80 L606.38 474.80 L606.88 474.80 L607.39 474.80 L607.89 474.80 L608.39 474.79 L608.89 474.73 L609.40 474.48 L609.90 473.77 L610.41 472.24 L610.92 469.62 L611.43 465.94 L611.94 461.46 L612.46 456.55 L612.97 451.65 L613.48 447.17 L613.99 443.46 L614.50 440.69 L615.00 438.82 L615.50 437.62 L616.00 436.75 L616.50 435.89 L617.00 434.71 L617.50 432.89 L618.01 430.20 L618.52 426.53 L619.03 421.89 L619.54 416.45 L620.05 410.36 L620.56 403.85 L621.07 397.10 L621.58 390.33 L622.09 383.72 L622.60 377.49 L623.11 371.83 L623.62 366.94 L624.13 363.02 L624.64 360.21 L625.15 358.56 L625.66 358.00 L626.17 358.32 L626.68 359.32 L627.19 360.87 L627.70 362.88 L628.21 365.31 L628.72 368.11 L629.23 371.24 L629.74 374.65 L630.25 378.31 L630.76 382.18 L631.27 386.20 L631.78 390.34 L632.29 394.58 L632.80 398.90" stroke="#a9d5de" stroke-width="1.5" fill="none" stroke-linejoin="round" stroke-linecap="round"/></svg>
<div class="t" style="left:676.90px;top:328.24px;font-size:10.5px;line-height:13.65px;font-weight:400;color:#16181d;-webkit-text-stroke:0.4px #16181d;letter-spacing:0.2px;">Average Queue Waiting Time</div>
<svg style="position:absolute;left:822.5px;top:328px;" width="12" height="12" viewBox="0 0 12 12"><circle cx="6" cy="6" r="4.9" stroke="#8c8e92" stroke-width="0.95" fill="none"/><path d="M4.6 4.9 Q4.6 3.5 6 3.5 Q7.4 3.5 7.4 4.8 Q7.4 5.6 6.5 6 Q6 6.3 6 7" stroke="#8c8e92" stroke-width="0.95" fill="none" stroke-linecap="round"/><circle cx="6" cy="8.5" r="0.55" fill="#8c8e92"/></svg>
<div class="t" style="left:686.00px;width:400px;text-align:right;top:328.24px;font-size:10.5px;line-height:13.65px;font-weight:400;color:#3c3e42;"><span style="color:#707275">Average </span><span style="font-weight:700;color:#3c3e42">2hrs 28min 45s</span></div>
<div style="position:absolute;left:727px;top:358px;width:360px;height:1px;background:#f3f4f6;"></div>
<div class="t" style="left:318.60px;width:400px;text-align:right;top:354.53px;font-size:9.5px;line-height:12.35px;font-weight:400;color:#707275;">8hrs</div>
<div class="t" style="left:318.60px;width:400px;text-align:right;top:382.63px;font-size:9.5px;line-height:12.35px;font-weight:400;color:#707275;">6hrs</div>
<div class="t" style="left:318.60px;width:400px;text-align:right;top:411.53px;font-size:9.5px;line-height:12.35px;font-weight:400;color:#707275;">4hrs</div>
<div class="t" style="left:318.60px;width:400px;text-align:right;top:440.43px;font-size:9.5px;line-height:12.35px;font-weight:400;color:#707275;">2hrs</div>
<div class="t" style="left:318.60px;width:400px;text-align:right;top:469.43px;font-size:9.5px;line-height:12.35px;font-weight:400;color:#707275;">0s</div>
<div class="t" style="left:539.80px;width:400px;text-align:center;top:478.33px;font-size:9.5px;line-height:12.35px;font-weight:400;color:#707275;">Oct 31</div>
<div class="t" style="left:590.50px;width:400px;text-align:center;top:478.33px;font-size:9.5px;line-height:12.35px;font-weight:400;color:#707275;">November</div>
<div class="t" style="left:640.60px;width:400px;text-align:center;top:478.33px;font-size:9.5px;line-height:12.35px;font-weight:400;color:#707275;">Nov 2</div>
<div class="t" style="left:691.90px;width:400px;text-align:center;top:478.33px;font-size:9.5px;line-height:12.35px;font-weight:400;color:#707275;">Nov 3</div>
<div class="t" style="left:742.60px;width:400px;text-align:center;top:478.33px;font-size:9.5px;line-height:12.35px;font-weight:400;color:#707275;">Nov 4</div>
<div class="t" style="left:793.30px;width:400px;text-align:center;top:478.33px;font-size:9.5px;line-height:12.35px;font-weight:400;color:#707275;">Nov 5</div>
<div class="t" style="left:869.10px;width:400px;text-align:center;top:478.33px;font-size:9.5px;line-height:12.35px;font-weight:400;color:#707275;">12:00</div>
<div class="t" style="left:531.4px;top:416.5px;width:300px;height:14px;line-height:14px;text-align:center;font-size:9.5px;color:#707275;transform:rotate(-90deg);">Time Waiting in Queue</div>
<svg style="position:absolute;left:0px;top:0px;pointer-events:none;" width="1119" height="726" viewBox="0 0 1119 726"><path d="M734.00 474.70 L734.50 474.70 L735.01 474.70 L735.51 474.70 L736.01 474.70 L736.51 474.70 L737.02 474.70 L737.52 474.70 L738.02 474.70 L738.53 474.70 L739.03 474.70 L739.53 474.70 L740.03 474.70 L740.54 474.70 L741.04 474.70 L741.54 474.70 L742.05 474.70 L742.55 474.70 L743.05 474.70 L743.55 474.70 L744.06 474.70 L744.56 474.70 L745.06 474.70 L745.57 474.70 L746.07 474.70 L746.57 474.70 L747.07 474.70 L747.58 474.70 L748.08 474.70 L748.58 474.70 L749.09 474.70 L749.59 474.70 L750.09 474.69 L750.59 474.66 L751.10 474.50 L751.60 474.04 L752.10 473.03 L752.61 471.28 L753.11 468.72 L753.61 465.45 L754.12 461.64 L754.62 457.48 L755.13 453.17 L755.63 448.91 L756.13 444.90 L756.64 441.34 L757.14 438.42 L757.64 436.33 L758.15 435.19 L758.65 435.06 L759.16 435.92 L759.67 437.64 L760.17 440.09 L760.68 443.12 L761.19 446.59 L761.69 450.35 L762.20 454.25 L762.71 458.15 L763.21 461.91 L763.72 465.38 L764.23 468.42 L764.73 470.88 L765.24 472.68 L765.75 473.81 L766.25 474.39 L766.75 474.62 L767.25 474.69 L767.75 474.70 L768.25 474.70 L768.75 474.70 L769.25 474.70 L769.75 474.70 L770.25 474.70 L770.75 474.70 L771.25 474.70 L771.75 474.70 L772.26 474.70 L772.76 474.70 L773.26 474.70 L773.76 474.70 L774.26 474.70 L774.76 474.70 L775.26 474.70 L775.76 474.70 L776.26 474.70 L776.76 474.70 L777.26 474.70 L777.76 474.70 L778.26 474.70 L778.76 474.70 L779.26 474.70 L779.76 474.70 L780.26 474.70 L780.76 474.70 L781.26 474.70 L781.76 474.70 L782.26 474.70 L782.76 474.70 L783.26 474.70 L783.76 474.70 L784.27 474.70 L784.77 474.70 L785.27 474.70 L785.77 474.70 L786.27 474.70 L786.77 474.70 L787.27 474.70 L787.77 474.70 L788.27 474.70 L788.77 474.70 L789.27 474.70 L789.77 474.70 L790.27 474.70 L790.77 474.70 L791.27 474.70 L791.77 474.70 L792.27 474.70 L792.77 474.70 L793.27 474.70 L793.77 474.70 L794.27 474.70 L794.77 474.70 L795.27 474.70 L795.77 474.70 L796.27 474.70 L796.78 474.70 L797.28 474.70 L797.78 474.70 L798.28 474.70 L798.78 474.70 L799.28 474.70 L799.78 474.70 L800.28 474.70 L800.78 474.70 L801.28 474.70 L801.78 474.70 L802.28 474.70 L802.78 474.70 L803.28 474.70 L803.78 474.70 L804.28 474.70 L804.78 474.70 L805.28 474.70 L805.78 474.70 L806.28 474.70 L806.78 474.70 L807.28 474.70 L807.78 474.70 L808.28 474.70 L808.79 474.70 L809.29 474.70 L809.79 474.70 L810.29 474.70 L810.79 474.70 L811.29 474.70 L811.79 474.70 L812.29 474.70 L812.79 474.70 L813.29 474.70 L813.79 474.70 L814.29 474.70 L814.79 474.70 L815.29 474.70 L815.79 474.70 L816.29 474.70 L816.79 474.70 L817.29 474.70 L817.79 474.70 L818.29 474.70 L818.79 474.70 L819.29 474.70 L819.79 474.70 L820.29 474.70 L820.80 474.70 L821.30 474.70 L821.80 474.70 L822.30 474.70 L822.80 474.70 L823.30 474.70 L823.80 474.70 L824.30 474.70 L824.80 474.70 L825.30 474.69 L825.80 474.60 L826.30 474.26 L826.80 473.26 L827.31 471.04 L827.81 467.15 L828.32 461.44 L828.83 454.06 L829.33 445.34 L829.84 435.65 L830.35 425.38 L830.85 414.92 L831.36 404.65 L831.87 394.96 L832.37 386.24 L832.88 378.87 L833.39 373.23 L833.89 369.63 L834.40 368.25 L834.90 369.10 L835.41 372.04 L835.91 376.80 L836.41 383.10 L836.92 390.63 L837.42 399.11 L837.92 408.25 L838.42 417.75 L838.93 427.33 L839.43 436.68 L839.93 445.53 L840.44 453.57 L840.94 460.53 L841.44 466.13 L841.95 470.19 L842.45 472.72 L842.95 474.01 L843.45 474.52 L843.95 474.67 L844.46 474.70 L844.96 474.70 L845.46 474.70 L845.96 474.70 L846.46 474.70 L846.96 474.70 L847.46 474.70 L847.97 474.70 L848.47 474.70 L848.97 474.70 L849.47 474.70 L849.97 474.70 L850.47 474.70 L850.97 474.70 L851.48 474.70 L851.98 474.70 L852.48 474.70 L852.98 474.70 L853.48 474.70 L853.98 474.70 L854.48 474.70 L854.99 474.70 L855.49 474.70 L855.99 474.70 L856.49 474.70 L856.99 474.70 L857.49 474.70 L857.99 474.70 L858.50 474.70 L859.00 474.70 L859.50 474.70 L860.00 474.70 L860.50 474.70 L861.00 474.70 L861.50 474.70 L862.00 474.70 L862.51 474.70 L863.01 474.70 L863.51 474.70 L864.01 474.70 L864.51 474.70 L865.01 474.70 L865.51 474.70 L866.02 474.70 L866.52 474.70 L867.02 474.70 L867.52 474.70 L868.02 474.70 L868.52 474.70 L869.02 474.70 L869.53 474.70 L870.03 474.70 L870.53 474.70 L871.03 474.70 L871.53 474.70 L872.03 474.70 L872.53 474.70 L873.04 474.70 L873.54 474.70 L874.04 474.70 L874.54 474.70 L875.04 474.70 L875.54 474.70 L876.04 474.70 L876.55 474.65 L877.05 474.45 L877.55 473.73 L878.05 471.91 L878.56 468.37 L879.06 462.76 L879.56 455.15 L880.07 445.87 L880.57 435.39 L881.07 424.22 L881.58 412.85 L882.08 401.80 L882.59 391.57 L883.09 382.64 L883.59 375.44 L884.10 370.22 L884.60 366.86 L885.10 364.88 L885.61 363.68 L886.11 362.82 L886.61 362.09 L887.11 361.42 L887.62 360.80 L888.12 360.22 L888.62 359.69 L889.12 359.22 L889.63 358.78 L890.13 358.40 L890.63 358.07 L891.14 357.78 L891.64 357.54 L892.14 357.35 L892.64 357.24 L893.15 357.30 L893.65 357.79 L894.15 359.15 L894.65 361.87 L895.16 366.25 L895.66 372.29 L896.16 379.79 L896.67 388.47 L897.17 398.01 L897.67 408.11 L898.18 418.44 L898.68 428.69 L899.18 438.55 L899.68 447.70 L900.19 455.82 L900.69 462.62 L901.19 467.78 L901.70 471.07 L902.20 472.35 L902.71 471.63 L903.22 469.08 L903.74 464.92 L904.25 459.40 L904.76 452.78 L905.27 445.30 L905.78 437.21 L906.29 428.74 L906.81 420.16 L907.32 411.69 L907.83 403.60 L908.34 396.12 L908.85 389.50 L909.36 383.98 L909.88 379.82 L910.39 377.25 L910.90 376.50 L911.40 377.69 L911.91 380.82 L912.41 385.74 L912.91 392.17 L913.42 399.81 L913.92 408.35 L914.42 417.45 L914.93 426.79 L915.43 436.05 L915.93 444.91 L916.44 453.04 L916.94 460.12 L917.44 465.86 L917.95 470.03 L918.45 472.65 L918.95 473.99 L919.45 474.51 L919.95 474.67 L920.46 474.70 L920.96 474.70 L921.46 474.70 L921.96 474.70 L922.46 474.70 L922.96 474.70 L923.46 474.70 L923.97 474.70 L924.47 474.70 L924.97 474.70 L925.47 474.70 L925.97 474.70 L926.47 474.70 L926.97 474.70 L927.48 474.70 L927.98 474.70 L928.48 474.70 L928.98 474.70 L929.48 474.70 L929.98 474.70 L930.48 474.70 L930.99 474.70 L931.49 474.70 L931.99 474.70 L932.49 474.70 L932.99 474.70 L933.49 474.70 L933.99 474.70 L934.50 474.70 L935.00 474.70 L935.50 474.70 L936.00 474.70 L936.50 474.70 L937.00 474.70 L937.50 474.70 L938.00 474.70 L938.51 474.70 L939.01 474.70 L939.51 474.70 L940.01 474.70 L940.51 474.70 L941.01 474.70 L941.51 474.70 L942.02 474.70 L942.52 474.70 L943.02 474.70 L943.52 474.70 L944.02 474.70 L944.52 474.70 L945.02 474.70 L945.53 474.70 L946.03 474.70 L946.53 474.70 L947.03 474.70 L947.53 474.70 L948.03 474.70 L948.53 474.70 L949.04 474.70 L949.54 474.70 L950.04 474.70 L950.54 474.70 L951.04 474.70 L951.54 474.70 L952.04 474.70 L952.55 474.68 L953.05 474.61 L953.55 474.34 L954.05 473.65 L954.56 472.31 L955.07 470.18 L955.58 467.24 L956.09 463.62 L956.60 459.47 L957.11 454.93 L957.62 450.20 L958.13 445.42 L958.64 440.76 L959.15 436.40 L959.66 432.49 L960.17 429.20 L960.68 426.69 L961.19 425.09 L961.70 424.50 L962.21 424.93 L962.73 426.32 L963.24 428.54 L963.75 431.49 L964.26 435.00 L964.77 438.95 L965.29 443.20 L965.80 447.60 L966.31 452.02 L966.83 456.32 L967.34 460.36 L967.85 464.00 L968.36 467.10 L968.88 469.56 L969.39 471.32 L969.90 472.44 L970.41 473.08 L970.92 473.46 L971.42 473.71 L971.93 473.92 L972.44 474.10 L972.95 474.25 L973.46 474.38 L973.97 474.48 L974.48 474.57 L974.98 474.63 L975.49 474.67 L976.00 474.69 L976.50 474.70 L977.00 474.70 L977.50 474.70 L978.00 474.70 L978.50 474.70 L979.00 474.70 L979.50 474.70 L980.00 474.70 L980.50 474.70 L981.00 474.70 L981.50 474.70 L982.00 474.70 L982.50 474.70 L983.00 474.70 L983.50 474.70 L984.00 474.70 L984.50 474.70 L985.00 474.70 L985.50 474.70 L986.00 474.70 L986.50 474.70 L987.00 474.70 L987.50 474.70 L988.00 474.70 L988.50 474.70 L989.00 474.70 L989.50 474.70 L990.00 474.70 L990.50 474.70 L991.00 474.70 L991.50 474.70 L992.00 474.70 L992.50 474.70 L993.00 474.70 L993.50 474.70 L994.00 474.70 L994.50 474.70 L995.00 474.70 L995.50 474.70 L996.00 474.70 L996.50 474.70 L997.00 474.70 L997.50 474.70 L998.00 474.70 L998.50 474.70 L999.00 474.70 L999.50 474.70 L1000.00 474.70 L1000.50 474.70 L1001.00 474.70 L1001.50 474.70 L1002.00 474.70 L1002.50 474.70 L1003.00 474.70 L1003.50 474.69 L1004.00 474.66 L1004.50 474.50 L1005.00 474.05 L1005.50 473.05 L1006.01 471.31 L1006.51 468.75 L1007.01 465.46 L1007.52 461.58 L1008.02 457.30 L1008.52 452.79 L1009.03 448.24 L1009.53 443.82 L1010.03 439.72 L1010.54 436.11 L1011.04 433.19 L1011.54 431.10 L1012.05 429.97 L1012.56 429.86 L1013.07 430.72 L1013.58 432.45 L1014.09 434.93 L1014.61 438.01 L1015.12 441.57 L1015.63 445.47 L1016.14 449.57 L1016.66 453.73 L1017.17 457.83 L1017.68 461.73 L1018.19 465.29 L1018.71 468.38 L1019.22 470.87 L1019.73 472.68 L1020.24 473.81 L1020.75 474.39 L1021.25 474.62 L1021.75 474.69 L1022.25 474.70 L1022.75 474.70 L1023.25 474.70 L1023.75 474.70 L1024.25 474.70 L1024.75 474.70 L1025.25 474.70 L1025.75 474.70 L1026.25 474.70 L1026.75 474.70 L1027.25 474.70 L1027.75 474.70 L1028.25 474.70 L1028.75 474.70 L1029.25 474.70 L1029.75 474.70 L1030.25 474.70 L1030.75 474.70 L1031.25 474.70 L1031.75 474.70 L1032.25 474.70 L1032.75 474.70 L1033.25 474.70 L1033.75 474.70 L1034.25 474.70 L1034.75 474.70 L1035.25 474.70 L1035.75 474.70 L1036.25 474.70 L1036.75 474.70 L1037.25 474.70 L1037.75 474.70 L1038.25 474.70 L1038.75 474.70 L1039.25 474.70 L1039.75 474.70 L1040.25 474.70 L1040.75 474.70 L1041.25 474.70 L1041.75 474.70 L1042.25 474.70 L1042.75 474.70 L1043.25 474.70 L1043.75 474.70 L1044.25 474.70 L1044.75 474.70 L1045.25 474.70 L1045.75 474.70 L1046.25 474.70 L1046.75 474.70 L1047.25 474.70 L1047.75 474.70 L1048.25 474.70 L1048.75 474.70 L1049.25 474.70 L1049.75 474.70 L1050.25 474.70 L1050.75 474.70 L1051.25 474.70 L1051.75 474.70 L1052.25 474.70 L1052.75 474.70 L1053.25 474.70 L1053.75 474.70 L1054.25 474.70 L1054.75 474.70 L1055.25 474.70 L1055.75 474.70 L1056.25 474.70 L1056.75 474.70 L1057.25 474.70 L1057.75 474.70 L1058.25 474.70 L1058.75 474.70 L1059.25 474.70 L1059.75 474.70 L1060.25 474.70 L1060.75 474.70 L1061.25 474.70 L1061.75 474.70 L1062.25 474.70 L1062.75 474.70 L1063.25 474.70 L1063.75 474.70 L1064.25 474.70 L1064.75 474.69 L1065.26 474.68 L1065.77 474.65 L1066.28 474.61 L1066.79 474.55 L1067.31 474.48 L1067.82 474.39 L1068.33 474.30 L1068.84 474.20 L1069.36 474.10 L1069.87 474.00 L1070.38 473.91 L1070.89 473.82 L1071.41 473.75 L1071.92 473.69 L1072.43 473.65 L1072.94 473.63 L1073.45 473.63 L1073.96 473.65 L1074.47 473.69 L1074.98 473.76 L1075.48 473.84 L1075.99 473.94 L1076.50 474.05 L1077.01 474.18 L1077.52 474.31 L1078.02 474.46 L1078.53 474.60 L1079.04 474.76 L1079.55 474.92" stroke="#a9d5de" stroke-width="1.5" fill="none" stroke-linejoin="round" stroke-linecap="round"/></svg>
<div class="t" style="left:230.70px;top:540.24px;font-size:10.5px;line-height:13.65px;font-weight:400;color:#16181d;-webkit-text-stroke:0.4px #16181d;letter-spacing:0.28px;">Merges Count</div>
<svg style="position:absolute;left:303.5px;top:540.5px;" width="12" height="12" viewBox="0 0 12 12"><circle cx="6" cy="6" r="4.9" stroke="#8c8e92" stroke-width="0.95" fill="none"/><path d="M4.6 4.9 Q4.6 3.5 6 3.5 Q7.4 3.5 7.4 4.8 Q7.4 5.6 6.5 6 Q6 6.3 6 7" stroke="#8c8e92" stroke-width="0.95" fill="none" stroke-linecap="round"/><circle cx="6" cy="8.5" r="0.55" fill="#8c8e92"/></svg>
<div class="t" style="left:239.10px;width:400px;text-align:right;top:540.24px;font-size:10.5px;line-height:13.65px;font-weight:400;color:#3c3e42;"><span style="color:#707275">Average </span><span style="font-weight:700;color:#3c3e42">7.3</span></div>
<div class="t" style="left:-127.90px;width:400px;text-align:right;top:572.63px;font-size:9.5px;line-height:12.35px;font-weight:400;color:#707275;">12</div>
<div class="t" style="left:-127.90px;width:400px;text-align:right;top:591.43px;font-size:9.5px;line-height:12.35px;font-weight:400;color:#707275;">10</div>
<div class="t" style="left:-127.90px;width:400px;text-align:right;top:609.43px;font-size:9.5px;line-height:12.35px;font-weight:400;color:#707275;">8</div>
<div class="t" style="left:-127.90px;width:400px;text-align:right;top:627.33px;font-size:9.5px;line-height:12.35px;font-weight:400;color:#707275;">6</div>
<div class="t" style="left:-127.90px;width:400px;text-align:right;top:645.53px;font-size:9.5px;line-height:12.35px;font-weight:400;color:#707275;">4</div>
<div class="t" style="left:-127.90px;width:400px;text-align:right;top:664.13px;font-size:9.5px;line-height:12.35px;font-weight:400;color:#707275;">2</div>
<div class="t" style="left:-127.90px;width:400px;text-align:right;top:682.33px;font-size:9.5px;line-height:12.35px;font-weight:400;color:#707275;">0</div>
<div class="t" style="left:110.70px;width:400px;text-align:center;top:691.33px;font-size:9.5px;line-height:12.35px;font-weight:400;color:#707275;">Oct 31</div>
<div class="t" style="left:158.60px;width:400px;text-align:center;top:691.33px;font-size:9.5px;line-height:12.35px;font-weight:400;color:#707275;">November</div>
<div class="t" style="left:206.80px;width:400px;text-align:center;top:691.33px;font-size:9.5px;line-height:12.35px;font-weight:400;color:#707275;">Nov 2</div>
<div class="t" style="left:254.90px;width:400px;text-align:center;top:691.33px;font-size:9.5px;line-height:12.35px;font-weight:400;color:#707275;">Nov 3</div>
<div class="t" style="left:303.00px;width:400px;text-align:center;top:691.33px;font-size:9.5px;line-height:12.35px;font-weight:400;color:#707275;">Nov 4</div>
<div class="t" style="left:351.70px;width:400px;text-align:center;top:691.33px;font-size:9.5px;line-height:12.35px;font-weight:400;color:#707275;">Nov 5</div>
<div class="t" style="left:424.00px;width:400px;text-align:center;top:691.33px;font-size:9.5px;line-height:12.35px;font-weight:400;color:#707275;">12:00</div>
<div class="t" style="left:84.9px;top:661px;width:300px;height:14px;line-height:14px;text-align:center;font-size:9.5px;color:#707275;transform:rotate(-90deg);">Merges</div>
<svg style="position:absolute;left:0px;top:0px;" width="1119" height="726" viewBox="0 0 1119 726"><path d="M325.60 687.5 V599.80 A3 3 0 0 1 331.60 599.80 V687.5 Z" fill="#b3d9e1"/><path d="M333.00 687.5 V654.00 A3 3 0 0 1 339.00 654.00 V687.5 Z" fill="#b3d9e1"/><path d="M470.00 687.5 V572.30 A3 3 0 0 1 476.00 572.30 V687.5 Z" fill="#b3d9e1"/><path d="M477.80 687.5 V654.00 A3 3 0 0 1 483.80 654.00 V687.5 Z" fill="#b3d9e1"/><path d="M518.10 687.5 V608.50 A3 3 0 0 1 524.10 608.50 V687.5 Z" fill="#b3d9e1"/><path d="M525.70 687.5 V590.30 A3 3 0 0 1 531.70 590.30 V687.5 Z" fill="#b3d9e1"/><path d="M566.80 687.5 V590.30 A3 3 0 0 1 572.80 590.30 V687.5 Z" fill="#b3d9e1"/><path d="M574.40 687.5 V672.00 A3 3 0 0 1 580.40 672.00 V687.5 Z" fill="#b3d9e1"/><path d="M614.70 687.5 V672.00 A3 3 0 0 1 620.70 672.00 V687.5 Z" fill="#b3d9e1"/><path d="M622.90 687.5 V627.00 A3 3 0 0 1 628.90 627.00 V687.5 Z" fill="#b3d9e1"/></svg>
<div class="t" style="left:677.20px;top:540.24px;font-size:10.5px;line-height:13.65px;font-weight:400;color:#16181d;-webkit-text-stroke:0.4px #16181d;letter-spacing:0.06px;">Max Queue Size</div>
<svg style="position:absolute;left:759.5px;top:540.5px;" width="12" height="12" viewBox="0 0 12 12"><circle cx="6" cy="6" r="4.9" stroke="#8c8e92" stroke-width="0.95" fill="none"/><path d="M4.6 4.9 Q4.6 3.5 6 3.5 Q7.4 3.5 7.4 4.8 Q7.4 5.6 6.5 6 Q6 6.3 6 7" stroke="#8c8e92" stroke-width="0.95" fill="none" stroke-linecap="round"/><circle cx="6" cy="8.5" r="0.55" fill="#8c8e92"/></svg>
<div class="t" style="left:686.00px;width:400px;text-align:right;top:540.24px;font-size:10.5px;line-height:13.65px;font-weight:400;color:#3c3e42;"><span style="color:#707275">Average Queue Size </span><span style="font-weight:700;color:#3c3e42">5.86</span></div>
<div class="t" style="left:318.60px;width:400px;text-align:right;top:568.63px;font-size:9.5px;line-height:12.35px;font-weight:400;color:#707275;">25</div>
<div class="t" style="left:318.60px;width:400px;text-align:right;top:591.83px;font-size:9.5px;line-height:12.35px;font-weight:400;color:#707275;">20</div>
<div class="t" style="left:318.60px;width:400px;text-align:right;top:614.13px;font-size:9.5px;line-height:12.35px;font-weight:400;color:#707275;">15</div>
<div class="t" style="left:318.60px;width:400px;text-align:right;top:636.63px;font-size:9.5px;line-height:12.35px;font-weight:400;color:#707275;">10</div>
<div class="t" style="left:318.60px;width:400px;text-align:right;top:659.63px;font-size:9.5px;line-height:12.35px;font-weight:400;color:#707275;">5</div>
<div class="t" style="left:318.60px;width:400px;text-align:right;top:682.73px;font-size:9.5px;line-height:12.35px;font-weight:400;color:#707275;">0</div>
<div class="t" style="left:539.80px;width:400px;text-align:center;top:691.33px;font-size:9.5px;line-height:12.35px;font-weight:400;color:#707275;">Oct 31</div>
<div class="t" style="left:590.50px;width:400px;text-align:center;top:691.33px;font-size:9.5px;line-height:12.35px;font-weight:400;color:#707275;">November</div>
<div class="t" style="left:640.60px;width:400px;text-align:center;top:691.33px;font-size:9.5px;line-height:12.35px;font-weight:400;color:#707275;">Nov 2</div>
<div class="t" style="left:691.90px;width:400px;text-align:center;top:691.33px;font-size:9.5px;line-height:12.35px;font-weight:400;color:#707275;">Nov 3</div>
<div class="t" style="left:742.60px;width:400px;text-align:center;top:691.33px;font-size:9.5px;line-height:12.35px;font-weight:400;color:#707275;">Nov 4</div>
<div class="t" style="left:793.30px;width:400px;text-align:center;top:691.33px;font-size:9.5px;line-height:12.35px;font-weight:400;color:#707275;">Nov 5</div>
<div class="t" style="left:869.10px;width:400px;text-align:center;top:691.33px;font-size:9.5px;line-height:12.35px;font-weight:400;color:#707275;">12:00</div>
<div class="t" style="left:531.4px;top:642.7px;width:300px;height:14px;line-height:14px;text-align:center;font-size:9.5px;color:#707275;transform:rotate(-90deg);">Max Queue Size</div>
<svg style="position:absolute;left:0px;top:0px;pointer-events:none;" width="1119" height="726" viewBox="0 0 1119 726"><path d="M733.60 669.10 L734.11 670.68 L734.62 672.24 L735.12 673.74 L735.63 675.19 L736.14 676.56 L736.65 677.85 L737.15 679.02 L737.66 680.06 L738.17 680.95 L738.68 681.68 L739.18 682.21 L739.69 682.57 L740.20 682.77 L740.71 682.86 L741.21 682.89 L741.72 682.90 L742.23 682.90 L742.74 682.90 L743.24 682.90 L743.75 682.90 L744.26 682.90 L744.77 682.90 L745.27 682.90 L745.78 682.90 L746.29 682.90 L746.80 682.90 L747.30 682.90 L747.81 682.90 L748.32 682.90 L748.82 682.90 L749.33 682.88 L749.84 682.81 L750.35 682.54 L750.85 681.85 L751.35 680.52 L751.86 678.39 L752.36 675.46 L752.86 671.84 L753.37 667.69 L753.87 663.17 L754.37 658.44 L754.88 653.68 L755.38 649.03 L755.88 644.67 L756.39 640.77 L756.89 637.49 L757.39 634.97 L757.90 633.34 L758.40 632.63 L758.91 632.78 L759.41 633.68 L759.92 635.19 L760.43 637.19 L760.93 639.57 L761.44 642.23 L761.95 645.08 L762.45 648.01 L762.96 650.92 L763.47 653.72 L763.97 656.30 L764.48 658.58 L764.99 660.46 L765.49 661.89 L766.00 662.90 L766.52 663.57 L767.05 664.01 L767.58 664.33 L768.10 664.58 L768.62 664.79 L769.15 664.99 L769.68 665.20 L770.20 665.44 L770.71 665.70 L771.23 665.99 L771.74 666.30 L772.26 666.62 L772.77 666.94 L773.29 667.26 L773.80 667.58 L774.31 667.87 L774.83 668.14 L775.34 668.37 L775.86 668.56 L776.37 668.71 L776.89 668.81 L777.40 668.86 L777.90 668.89 L778.41 668.90 L778.91 668.90 L779.41 668.90 L779.92 668.90 L780.42 668.90 L780.92 668.90 L781.43 668.90 L781.93 668.90 L782.43 668.90 L782.94 668.90 L783.44 668.90 L783.94 668.89 L784.45 668.84 L784.96 668.74 L785.47 668.54 L785.98 668.21 L786.49 667.76 L787.01 667.21 L787.52 666.56 L788.03 665.86 L788.54 665.13 L789.06 664.37 L789.57 663.64 L790.08 662.94 L790.59 662.29 L791.11 661.74 L791.62 661.30 L792.13 661.00 L792.64 660.89 L793.16 661.04 L793.67 661.48 L794.18 662.23 L794.69 663.25 L795.20 664.47 L795.72 665.84 L796.23 667.26 L796.74 668.66 L797.25 669.96 L797.76 671.10 L798.28 671.99 L798.79 672.61 L799.30 672.97 L799.81 673.13 L800.31 673.18 L800.82 673.20 L801.33 673.20 L801.83 673.20 L802.34 673.20 L802.85 673.20 L803.35 673.20 L803.86 673.20 L804.37 673.20 L804.87 673.20 L805.38 673.20 L805.89 673.20 L806.39 673.20 L806.90 673.20 L807.41 673.20 L807.91 673.20 L808.42 673.20 L808.93 673.20 L809.43 673.19 L809.94 673.15 L810.45 673.00 L810.95 672.63 L811.46 671.90 L811.96 670.76 L812.46 669.20 L812.97 667.31 L813.47 665.18 L813.97 662.92 L814.48 660.64 L814.98 658.43 L815.49 656.41 L815.99 654.68 L816.49 653.33 L817.00 652.44 L817.50 652.03 L818.01 652.06 L818.52 652.46 L819.04 653.16 L819.55 654.09 L820.06 655.21 L820.57 656.47 L821.08 657.84 L821.59 659.27 L822.11 660.73 L822.62 662.16 L823.13 663.53 L823.64 664.79 L824.15 665.91 L824.66 666.85 L825.18 667.55 L825.69 667.99 L826.20 668.11 L826.71 667.92 L827.23 667.40 L827.74 666.58 L828.26 665.50 L828.77 664.22 L829.29 662.79 L829.80 661.27 L830.31 659.69 L830.83 658.13 L831.34 656.62 L831.86 655.23 L832.37 653.99 L832.89 652.96 L833.40 652.14 L833.91 651.52 L834.42 651.06 L834.94 650.71 L835.45 650.43 L835.96 650.17 L836.48 649.90 L836.99 649.58 L837.50 649.18 L838.00 648.68 L838.51 648.08 L839.01 647.41 L839.52 646.68 L840.02 645.93 L840.53 645.19 L841.03 644.50 L841.53 643.89 L842.04 643.40 L842.54 643.06 L843.05 642.95 L843.56 643.13 L844.07 643.69 L844.58 644.63 L845.10 645.93 L845.61 647.54 L846.12 649.38 L846.64 651.38 L847.15 653.45 L847.66 655.52 L848.18 657.52 L848.69 659.36 L849.20 660.97 L849.72 662.27 L850.23 663.23 L850.74 663.83 L851.25 664.14 L851.75 664.26 L852.25 664.29 L852.75 664.30 L853.25 664.30 L853.76 664.30 L854.26 664.30 L854.76 664.30 L855.26 664.30 L855.76 664.30 L856.26 664.30 L856.76 664.30 L857.26 664.30 L857.76 664.30 L858.26 664.30 L858.76 664.30 L859.27 664.30 L859.77 664.30 L860.27 664.30 L860.77 664.30 L861.27 664.30 L861.77 664.30 L862.27 664.30 L862.77 664.30 L863.27 664.30 L863.77 664.30 L864.27 664.30 L864.78 664.30 L865.28 664.30 L865.78 664.30 L866.28 664.30 L866.78 664.30 L867.28 664.30 L867.78 664.30 L868.28 664.30 L868.78 664.30 L869.28 664.30 L869.79 664.30 L870.29 664.30 L870.79 664.30 L871.29 664.30 L871.79 664.30 L872.29 664.30 L872.79 664.30 L873.29 664.30 L873.79 664.30 L874.29 664.30 L874.79 664.30 L875.30 664.30 L875.80 664.30 L876.30 664.30 L876.80 664.28 L877.30 664.21 L877.80 664.01 L878.30 663.56 L878.81 662.77 L879.31 661.61 L879.81 660.11 L880.32 658.33 L880.82 656.36 L881.33 654.27 L881.83 652.13 L882.33 650.03 L882.84 648.05 L883.34 646.25 L883.84 644.71 L884.35 643.47 L884.85 642.55 L885.35 641.90 L885.85 641.44 L886.35 641.07 L886.85 640.70 L887.35 640.23 L887.85 639.57 L888.36 638.67 L888.88 637.49 L889.40 636.07 L889.92 634.47 L890.44 632.75 L890.96 630.98 L891.48 629.24 L892.00 627.59 L892.52 626.12 L893.04 624.87 L893.56 623.87 L894.07 623.11 L894.59 622.49 L895.11 621.86 L895.62 621.01 L896.14 619.62 L896.66 617.31 L897.18 613.76 L897.70 608.91 L898.22 603.01 L898.74 596.47 L899.26 589.81 L899.78 583.54 L900.30 578.16 L900.82 574.07 L901.34 571.43 L901.85 570.05 L902.36 569.50 L902.87 569.34 L903.38 569.30 L903.88 569.30 L904.39 569.30 L904.90 569.30 L905.41 569.30 L905.92 569.30 L906.42 569.30 L906.93 569.30 L907.44 569.30 L907.95 569.30 L908.45 569.30 L908.96 569.30 L909.47 569.30 L909.98 569.32 L910.48 569.41 L910.99 569.81 L911.50 570.98 L912.00 573.55 L912.51 578.04 L913.01 584.59 L913.51 592.98 L914.02 602.79 L914.52 613.55 L915.03 624.75 L915.53 635.90 L916.03 646.50 L916.54 656.07 L917.04 664.14 L917.54 670.35 L918.05 674.62 L918.56 677.21 L919.07 678.66 L919.58 679.50 L920.09 680.06 L920.61 680.51 L921.12 680.91 L921.63 681.31 L922.14 681.75 L922.66 682.26 L923.18 682.83 L923.70 683.45 L924.22 684.09 L924.74 684.73 L925.26 685.33 L925.78 685.87 L926.30 686.30 L926.82 686.62 L927.34 686.78 L927.86 686.79 L928.37 686.63 L928.88 686.32 L929.39 685.87 L929.91 685.33 L930.42 684.69 L930.93 684.00 L931.44 683.27 L931.96 682.53 L932.47 681.80 L932.98 681.11 L933.49 680.47 L934.01 679.92 L934.52 679.48 L935.03 679.16 L935.54 678.98 L936.05 678.92 L936.55 678.95 L937.06 679.07 L937.56 679.24 L938.06 679.47 L938.56 679.73 L939.07 680.02 L939.57 680.33 L940.07 680.65 L940.58 680.98 L941.08 681.31 L941.58 681.63 L942.08 681.93 L942.59 682.21 L943.09 682.45 L943.59 682.65 L944.09 682.77 L944.60 682.75 L945.10 682.45 L945.62 681.70 L946.13 680.35 L946.65 678.38 L947.17 675.86 L947.68 672.93 L948.20 669.73 L948.72 666.44 L949.23 663.20 L949.75 660.17 L950.27 657.49 L950.78 655.27 L951.30 653.53 L951.82 652.22 L952.34 651.24 L952.86 650.48 L953.38 649.88 L953.90 649.37 L954.42 648.91 L954.94 648.45 L955.46 647.94 L955.98 647.36 L956.50 646.68 L957.02 645.90 L957.54 645.03 L958.06 644.11 L958.58 643.15 L959.10 642.18 L959.62 641.20 L960.14 640.23 L960.66 639.29 L961.18 638.40 L961.70 637.54 L962.21 636.71 L962.73 635.90 L963.24 635.09 L963.75 634.29 L964.26 633.51 L964.77 632.75 L965.29 632.02 L965.80 631.33 L966.31 630.69 L966.83 630.11 L967.34 629.60 L967.85 629.16 L968.36 628.81 L968.88 628.58 L969.39 628.56 L969.90 628.91 L970.40 629.87 L970.91 631.62 L971.41 634.23 L971.91 637.63 L972.42 641.69 L972.92 646.26 L973.42 651.19 L973.92 656.31 L974.43 661.47 L974.93 666.51 L975.43 671.28 L975.94 675.61 L976.44 679.36 L976.94 682.37 L977.45 684.53 L977.95 685.80 L978.46 686.25 L978.97 686.04 L979.48 685.35 L979.99 684.29 L980.50 682.95 L981.01 681.40 L981.53 679.69 L982.04 677.87 L982.55 676.00 L983.06 674.13 L983.57 672.31 L984.09 670.60 L984.60 669.05 L985.11 667.71 L985.62 666.64 L986.13 665.88 L986.64 665.47 L987.16 665.38 L987.67 665.61 L988.18 666.10 L988.69 666.81 L989.21 667.69 L989.72 668.71 L990.23 669.83 L990.74 671.00 L991.26 672.20 L991.77 673.37 L992.28 674.49 L992.79 675.51 L993.31 676.39 L993.82 677.09 L994.33 677.54 L994.84 677.62 L995.35 677.19 L995.86 676.08 L996.36 674.22 L996.86 671.67 L997.37 668.54 L997.87 664.97 L998.37 661.13 L998.88 657.16 L999.38 653.23 L999.89 649.49 L1000.39 646.09 L1000.89 643.17 L1001.40 640.82 L1001.90 639.01 L1002.40 637.62 L1002.91 636.49 L1003.41 635.50 L1003.91 634.59 L1004.41 633.75 L1004.92 632.97 L1005.42 632.25 L1005.92 631.58 L1006.42 630.98 L1006.93 630.44 L1007.43 629.96 L1007.93 629.54 L1008.44 629.18 L1008.94 628.88 L1009.44 628.64 L1009.94 628.46 L1010.45 628.37 L1010.95 628.43 L1011.45 628.72 L1011.95 629.34 L1012.46 630.36 L1012.96 631.79 L1013.46 633.58 L1013.97 635.66 L1014.47 637.99 L1014.97 640.48 L1015.48 643.07 L1015.98 645.70 L1016.48 648.31 L1016.98 650.82 L1017.49 653.17 L1017.99 655.30 L1018.49 657.14 L1019.00 658.64 L1019.50 659.80 L1020.02 660.63 L1020.53 661.23 L1021.05 661.70 L1021.57 662.19 L1022.08 662.85 L1022.60 663.80 L1023.12 665.14 L1023.63 666.89 L1024.15 669.01 L1024.67 671.41 L1025.18 673.96 L1025.70 676.56 L1026.22 679.08 L1026.73 681.38 L1027.25 683.36 L1027.77 684.92 L1028.28 685.99 L1028.80 686.60 L1029.30 686.88 L1029.81 686.97 L1030.31 687.00 L1030.81 687.00 L1031.31 687.00 L1031.82 687.00 L1032.32 687.00 L1032.82 687.00 L1033.32 687.00 L1033.83 687.00 L1034.33 687.00 L1034.83 687.00 L1035.34 687.00 L1035.84 687.00 L1036.34 687.00 L1036.84 687.00 L1037.35 687.00 L1037.85 687.00 L1038.35 687.00 L1038.85 687.00 L1039.36 687.00 L1039.86 687.00 L1040.36 687.00 L1040.86 687.00 L1041.37 687.00 L1041.87 687.00 L1042.37 687.00 L1042.88 687.00 L1043.38 687.00 L1043.88 687.00 L1044.38 687.00 L1044.89 687.00 L1045.39 687.00 L1045.89 687.00 L1046.39 686.99 L1046.90 686.95 L1047.40 686.84 L1047.92 686.59 L1048.43 686.15 L1048.95 685.53 L1049.47 684.75 L1049.98 683.85 L1050.50 682.90 L1051.02 681.95 L1051.53 681.05 L1052.05 680.27 L1052.57 679.65 L1053.08 679.21 L1053.60 678.96 L1054.10 678.85 L1054.60 678.81 L1055.11 678.80 L1055.61 678.80 L1056.11 678.80 L1056.61 678.80 L1057.12 678.80 L1057.62 678.80 L1058.12 678.80 L1058.62 678.80 L1059.13 678.80 L1059.63 678.80 L1060.13 678.80 L1060.63 678.80 L1061.14 678.80 L1061.64 678.80 L1062.14 678.80 L1062.64 678.78 L1063.15 678.70 L1063.65 678.42 L1064.15 677.71 L1064.65 676.32 L1065.16 674.09 L1065.66 671.02 L1066.16 667.20 L1066.67 662.78 L1067.17 657.93 L1067.67 652.79 L1068.18 647.53 L1068.68 642.32 L1069.18 637.30 L1069.68 632.64 L1070.19 628.51 L1070.69 625.05 L1071.19 622.41 L1071.70 620.69 L1072.20 619.91 L1072.71 620.00 L1073.21 620.84 L1073.72 622.31 L1074.23 624.32 L1074.73 626.83 L1075.24 629.79 L1075.75 633.14 L1076.25 636.86 L1076.76 640.88 L1077.27 645.18 L1077.77 649.69 L1078.28 654.37 L1078.79 659.17 L1079.29 664.10 L1079.80 669.10" stroke="#a9d5de" stroke-width="1.5" fill="none" stroke-linejoin="round" stroke-linecap="round"/></svg>
<div style="position:absolute;left:207px;top:718px;width:910px;height:8px;background:#f6f7f9;"></div>
<div style="position:absolute;left:207px;top:717px;width:898px;height:2px;background:#fdfdfe;"></div>
</body></html>
